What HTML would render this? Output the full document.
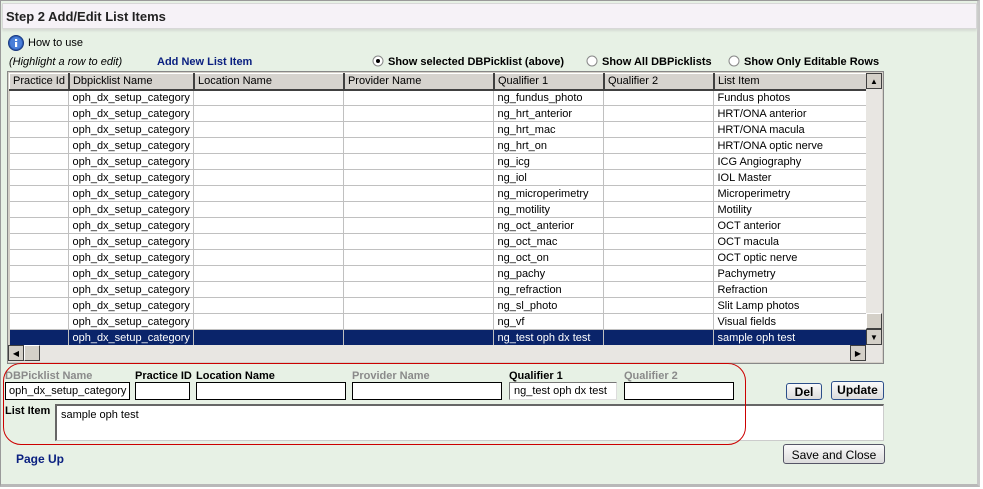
<!DOCTYPE html>
<html><head><style>
*{box-sizing:border-box;margin:0;padding:0}
body{width:983px;height:489px;background:#fff;font-family:"Liberation Sans",sans-serif;font-size:11px;position:relative;overflow:hidden}
.a{position:absolute}
#outer{left:0;top:0;width:980px;height:487px;background:#e7f1e5;border:1px solid #9a9a9a;border-right:3px solid #c8c8c8;border-bottom:3px solid #b8b8b8}
#hdr{left:2px;top:3px;width:975px;height:26px;background:#f6f2f7;border:1px solid #d8d8d8;box-shadow:0 2px 2px #d6dcd4;font-weight:bold;font-size:13px;padding:5px 0 0 3px;color:#222}
table{border-collapse:collapse;table-layout:fixed;position:absolute;left:9px;top:73px}
td{height:16px;border-right:1px solid #c0c0c0;border-bottom:1px solid #c0c0c0;padding:0 3px;white-space:nowrap;overflow:hidden;font-size:11px;background:#fff;color:#000}
tr.h td{background:#d6d3ce;border-right:2px solid #404040;border-bottom:2px solid #404040;border-top:1px solid #fff;border-left:1px solid #fff;height:16px}
tr.s td{background:#0a246a;color:#fff}
.lbl{font-weight:bold;font-size:11px}
.g{color:#8a8a8a}
.inp{background:#fff;border:1px solid #000;height:18px;font-size:11px;padding:2px 4px}
.btn{background:linear-gradient(#fafafa,#dcdcdc);border:1px solid #2c4f8a;border-radius:3px;font-weight:bold;font-size:12px;text-align:center;padding-top:1px}
</style></head><body>
<div id="outer" class="a"></div>
<div id="hdr" class="a">Step 2 Add/Edit List Items</div>
<svg class="a" style="left:8px;top:35px" width="16" height="16"><circle cx="8" cy="8" r="7.5" fill="#2f5fb8" stroke="#1a3a80"/><circle cx="8" cy="8" r="6" fill="#4a7fd8"/><rect x="7" y="7" width="2.2" height="5" fill="#fff"/><rect x="7" y="4" width="2.2" height="2" fill="#fff"/></svg>
<div class="a" style="left:28px;top:37px">How to use</div>
<div class="a" style="left:9px;top:56px;font-style:italic">(Highlight a row to edit)</div>
<div class="a" style="left:157px;top:56px;color:#0a2080;font-weight:bold">Add New List Item</div>
<svg class="a" style="left:372px;top:55px" width="12" height="12"><circle cx="6" cy="6" r="5" fill="#fff" stroke="#888"/><circle cx="6" cy="6" r="2" fill="#000"/></svg>
<div class="a lbl" style="left:388px;top:56px">Show selected DBPicklist (above)</div>
<svg class="a" style="left:586px;top:55px" width="12" height="12"><circle cx="6" cy="6" r="5" fill="#fff" stroke="#888"/></svg>
<div class="a lbl" style="left:602px;top:56px">Show All DBPicklists</div>
<svg class="a" style="left:728px;top:55px" width="12" height="12"><circle cx="6" cy="6" r="5" fill="#fff" stroke="#888"/></svg>
<div class="a lbl" style="left:744px;top:56px">Show Only Editable Rows</div>
<div class="a" style="left:7px;top:71px;width:877px;height:293px;border:1px solid #888;background:#d4d0c8"></div>
<table>
<colgroup><col style="width:59px"><col style="width:125px"><col style="width:150px"><col style="width:150px"><col style="width:110px"><col style="width:110px"><col style="width:153px"></colgroup>
<tr class="h"><td>Practice Id</td><td>Dbpicklist Name</td><td>Location Name</td><td>Provider Name</td><td>Qualifier 1</td><td>Qualifier 2</td><td>List Item</td></tr>
<tr><td></td><td>oph_dx_setup_category</td><td></td><td></td><td>ng_fundus_photo</td><td></td><td>Fundus photos</td></tr>
<tr><td></td><td>oph_dx_setup_category</td><td></td><td></td><td>ng_hrt_anterior</td><td></td><td>HRT/ONA anterior</td></tr>
<tr><td></td><td>oph_dx_setup_category</td><td></td><td></td><td>ng_hrt_mac</td><td></td><td>HRT/ONA macula</td></tr>
<tr><td></td><td>oph_dx_setup_category</td><td></td><td></td><td>ng_hrt_on</td><td></td><td>HRT/ONA optic nerve</td></tr>
<tr><td></td><td>oph_dx_setup_category</td><td></td><td></td><td>ng_icg</td><td></td><td>ICG Angiography</td></tr>
<tr><td></td><td>oph_dx_setup_category</td><td></td><td></td><td>ng_iol</td><td></td><td>IOL Master</td></tr>
<tr><td></td><td>oph_dx_setup_category</td><td></td><td></td><td>ng_microperimetry</td><td></td><td>Microperimetry</td></tr>
<tr><td></td><td>oph_dx_setup_category</td><td></td><td></td><td>ng_motility</td><td></td><td>Motility</td></tr>
<tr><td></td><td>oph_dx_setup_category</td><td></td><td></td><td>ng_oct_anterior</td><td></td><td>OCT anterior</td></tr>
<tr><td></td><td>oph_dx_setup_category</td><td></td><td></td><td>ng_oct_mac</td><td></td><td>OCT macula</td></tr>
<tr><td></td><td>oph_dx_setup_category</td><td></td><td></td><td>ng_oct_on</td><td></td><td>OCT optic nerve</td></tr>
<tr><td></td><td>oph_dx_setup_category</td><td></td><td></td><td>ng_pachy</td><td></td><td>Pachymetry</td></tr>
<tr><td></td><td>oph_dx_setup_category</td><td></td><td></td><td>ng_refraction</td><td></td><td>Refraction</td></tr>
<tr><td></td><td>oph_dx_setup_category</td><td></td><td></td><td>ng_sl_photo</td><td></td><td>Slit Lamp photos</td></tr>
<tr><td></td><td>oph_dx_setup_category</td><td></td><td></td><td>ng_vf</td><td></td><td>Visual fields</td></tr>
<tr class="s"><td></td><td>oph_dx_setup_category</td><td></td><td></td><td>ng_test oph dx test</td><td></td><td>sample oph test</td></tr>
</table>
<!-- vertical scrollbar -->
<div class="a" style="left:866px;top:73px;width:16px;height:272px;background:#e8e6e2"></div>
<div class="a btn" style="left:866px;top:73px;width:16px;height:16px;border:1px solid #404040;border-radius:0;background:#d4d0c8;font-size:8px;padding-top:3px">▲</div>
<div class="a" style="left:866px;top:313px;width:16px;height:16px;background:#d4d0c8;border:1px solid #fff;border-right-color:#404040;border-bottom-color:#404040"></div>
<div class="a" style="left:866px;top:329px;width:16px;height:16px;background:#d4d0c8;border:1px solid #404040;font-size:8px;text-align:center;padding-top:3px">▼</div>
<!-- horizontal scrollbar -->
<div class="a" style="left:8px;top:345px;width:874px;height:17px;background:#e8e6e2"></div>
<div class="a" style="left:8px;top:345px;width:16px;height:16px;background:#d4d0c8;border:1px solid #404040;font-size:8px;text-align:center;padding-top:3px">◀</div>
<div class="a" style="left:24px;top:345px;width:16px;height:16px;background:#d4d0c8;border:1px solid #fff;border-right-color:#404040;border-bottom-color:#404040"></div>
<div class="a" style="left:850px;top:345px;width:16px;height:16px;background:#d4d0c8;border:1px solid #404040;font-size:8px;text-align:center;padding-top:3px">▶</div>
<!-- form -->
<div class="a lbl g" style="left:5px;top:370px">DBPicklist Name</div>
<div class="a lbl" style="left:135px;top:370px">Practice ID</div>
<div class="a lbl" style="left:196px;top:370px">Location Name</div>
<div class="a lbl g" style="left:352px;top:370px">Provider Name</div>
<div class="a lbl" style="left:509px;top:370px">Qualifier 1</div>
<div class="a lbl g" style="left:624px;top:370px">Qualifier 2</div>
<div class="a inp" style="left:5px;top:382px;width:125px;padding-left:3px">oph_dx_setup_category</div>
<div class="a inp" style="left:135px;top:382px;width:55px"></div>
<div class="a inp" style="left:196px;top:382px;width:150px"></div>
<div class="a inp" style="left:352px;top:382px;width:150px"></div>
<div class="a inp" style="left:509px;top:382px;width:108px;border-color:#777 #ddd #ddd #777">ng_test oph dx test</div>
<div class="a inp" style="left:624px;top:382px;width:110px"></div>
<div class="a btn" style="left:786px;top:383px;width:36px;height:17px">Del</div>
<div class="a btn" style="left:831px;top:381px;width:53px;height:19px">Update</div>
<div class="a lbl" style="left:5px;top:405px">List Item</div>
<div class="a" style="left:55px;top:404px;width:829px;height:37px;background:#fff;border:1px solid #ccc;border-top:2px solid #666;border-left:2px solid #666;padding:3px 4px">sample oph test</div>
<div class="a" style="left:3px;top:363px;width:743px;height:82px;border:1px solid #c00;border-radius:18px"></div>
<div class="a" style="left:16px;top:452px;color:#0a2080;font-weight:bold;font-size:12px">Page Up</div>
<div class="a btn" style="left:783px;top:444px;width:102px;height:20px;font-weight:normal;border-color:#556;padding-top:3px">Save and Close</div>
</body></html>
